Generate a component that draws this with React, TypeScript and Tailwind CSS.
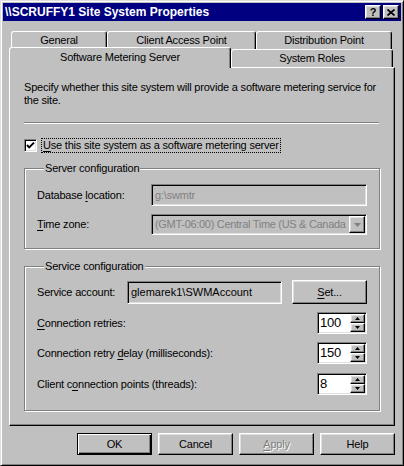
import React from 'react';

const raised =
  'border border-t-white border-l-white border-r-black border-b-black shadow-[inset_-1px_-1px_0_#808080,inset_1px_1px_0_#dfdfdf]';
const sunken =
  'border border-t-[#808080] border-l-[#808080] border-r-white border-b-white shadow-[inset_1px_1px_0_#000,inset_-1px_-1px_0_#dfdfdf]';
const group =
  'm-0 border border-[#808080] p-0 shadow-[inset_1px_1px_0_#fff,1px_1px_0_#fff]';

function U({ children }: { children: React.ReactNode }) {
  return <span className="underline decoration-1 underline-offset-[2px]">{children}</span>;
}

function Tab({ label, width, selected }: { label: string; width: string; selected?: boolean }) {
  return (
    <div
      className={`${width} flex items-center justify-center rounded-t-[3px] border-t border-l border-r border-t-white border-l-white border-r-black bg-[#c0c0c0] shadow-[inset_-1px_0_0_#808080] ${
        selected ? 'relative z-10 -mb-[1px] h-[21px] pb-[2px]' : 'h-[18px]'
      }`}
    >
      {label}
    </div>
  );
}

function Arrow({ up, gray, size = 'sm' }: { up?: boolean; gray?: boolean; size?: 'sm' | 'md' }) {
  const w = size === 'sm' ? 5 : 7;
  const h = size === 'sm' ? 3 : 4;
  return (
    <svg width={w} height={h} viewBox={`0 0 ${w} ${h}`}>
      <polygon
        points={up ? `0,${h} ${w / 2},0 ${w},${h}` : `0,0 ${w / 2},${h} ${w},0`}
        fill={gray ? '#808080' : '#000'}
      />
    </svg>
  );
}

function Spinner({ value }: { value: string }) {
  return (
    <div className={`${sunken} flex h-[22px] w-[50px] bg-white`}>
      <span className="flex-1 pl-[2px] pt-[3px] text-[13px] leading-[14px] text-black">{value}</span>
      <div className="my-[1px] mr-[1px] flex w-[15px] flex-col">
        <div className={`${raised} flex h-[9px] items-center justify-center bg-[#c0c0c0]`}>
          <Arrow up />
        </div>
        <div className={`${raised} flex h-[9px] items-center justify-center bg-[#c0c0c0]`}>
          <Arrow />
        </div>
      </div>
    </div>
  );
}

function Btn({ children, def, disabled }: { children: React.ReactNode; def?: boolean; disabled?: boolean }) {
  const edge = def
    ? 'border border-black shadow-[inset_1px_1px_0_#fff,inset_-1px_-1px_0_#000,inset_-2px_-2px_0_#808080]'
    : raised;
  return (
    <div
      className={`${edge} flex h-[22px] w-[75px] items-center justify-center bg-[#c0c0c0] ${
        disabled ? 'text-[#808080] [text-shadow:1px_1px_0_#ffffff]' : 'text-black'
      }`}
    >
      {children}
    </div>
  );
}

export default function App() {
  return (
    <div className="h-[466px] w-[404px] overflow-hidden border border-t-[#dfdfdf] border-l-[#dfdfdf] border-r-black border-b-black bg-[#c0c0c0] p-[2px] font-['Liberation_Sans',Arial,sans-serif] text-[11px] leading-[13px] tracking-[-0.2px] text-black shadow-[inset_1px_1px_0_#fff,inset_-1px_-1px_0_#808080]">
      {/* title bar */}
      <div className="flex h-[18px] items-center bg-[#000080] pl-[2px] pr-[2px]">
        <span className="flex-1 text-[12px] font-bold leading-none tracking-normal text-white">
          {'\\\\SCRUFFY1 Site System Properties'}
        </span>
        <div className={`${raised} flex h-[14px] w-[16px] items-center justify-center bg-[#c0c0c0] text-[11px] font-bold leading-none`}>
          ?
        </div>
        <div className={`${raised} ml-[2px] flex h-[14px] w-[16px] items-center justify-center bg-[#c0c0c0]`}>
          <svg width="8" height="7" viewBox="0 0 8 7">
            <path d="M0.5 0.5 L7.5 6.5 M7.5 0.5 L0.5 6.5" stroke="#000" strokeWidth="1.7" />
          </svg>
        </div>
      </div>

      <div className="px-[6px] pt-[10px]">
        {/* tabs */}
        <div className="ml-[2px] flex h-[17px]">
          <Tab label="General" width="w-[96px]" />
          <Tab label="Client Access Point" width="w-[149px]" />
          <Tab label="Distribution Point" width="w-[136px]" />
        </div>
        <div className="-mt-[1px] flex h-[20px] items-end">
          <Tab label="Software Metering Server" width="w-[222px]" selected />
          <Tab label="System Roles" width="w-[162px]" />
        </div>

        {/* panel */}
        <div className="h-[359px] w-[386px] border border-t-white border-l-white border-r-black border-b-black px-[14px] pt-[13px] shadow-[inset_-1px_-1px_0_#808080]">
          <p>
            Specify whether this site system will provide a software metering service for
            <br />
            the site.
          </p>
          <div className="mt-[15px] h-[2px] w-[355px] border-t border-b border-t-[#808080] border-b-white" />

          <div className="mt-[13px] flex h-[16px] items-center">
            <div className={`${sunken} flex h-[13px] w-[13px] items-center justify-center bg-white`}>
              <svg width="9" height="9" viewBox="0 0 9 9">
                <polyline points="1,4 3.2,6.4 8,1.6" fill="none" stroke="#000" strokeWidth="2" />
              </svg>
            </div>
            <span className="ml-[4px] border border-dotted border-black px-[1px]">
              <U>U</U>se this site system as a software metering server
            </span>
          </div>

          {/* server configuration */}
          <fieldset className={`${group} mt-[9px] px-[12px] pb-[13px]`}>
            <legend className="ml-[7px] bg-[#c0c0c0] px-[1px]">Server configuration</legend>
            <div className="mt-[9px] flex h-[22px] items-center">
              <span className="w-[114px]">
                Database <U>l</U>ocation:
              </span>
              <div className={`${sunken} flex h-[22px] w-[216px] items-center bg-[#c0c0c0] pl-[3px] text-[#808080]`}>
                {'g:\\swmtr'}
              </div>
            </div>
            <div className="mt-[8px] flex h-[21px] items-center">
              <span className="w-[114px]">
                <U>T</U>ime zone:
              </span>
              <div className={`${sunken} flex h-[21px] w-[216px] items-center bg-[#c0c0c0]`}>
                <span className="flex-1 overflow-hidden whitespace-nowrap pl-[3px] tracking-[-0.3px] text-[#808080]">
                  (GMT-06:00) Central Time (US &amp; Canada
                </span>
                <div className={`${raised} mr-[1px] flex h-[17px] w-[16px] shrink-0 items-center justify-center bg-[#c0c0c0]`}>
                  <Arrow gray size="md" />
                </div>
              </div>
            </div>
          </fieldset>

          {/* service configuration */}
          <fieldset className={`${group} mt-[11px] px-[12px] pb-[15px]`}>
            <legend className="ml-[7px] bg-[#c0c0c0] px-[1px]">Service configuration</legend>
            <div className="mt-[7px] flex h-[24px] items-center">
              <span className="w-[90px]">Service account:</span>
              <div className={`${sunken} flex h-[23px] w-[155px] items-center bg-[#c0c0c0] pl-[3px] tracking-normal`}>
                {'glemarek1\\SWMAccount'}
              </div>
              <div className={`${raised} ml-auto flex h-[24px] w-[75px] items-center justify-center bg-[#c0c0c0]`}>
                <span>
                  <U>S</U>et...
                </span>
              </div>
            </div>
            <div className="mt-[8px] flex h-[22px] items-center">
              <span className="flex-1">
                <U>C</U>onnection retries:
              </span>
              <Spinner value="100" />
            </div>
            <div className="mt-[8px] flex h-[22px] items-center">
              <span className="flex-1">
                Connection retry <U>d</U>elay (milliseconds):
              </span>
              <Spinner value="150" />
            </div>
            <div className="mt-[9px] flex h-[22px] items-center">
              <span className="flex-1">
                Client c<U>o</U>nnection points (threads):
              </span>
              <Spinner value="8" />
            </div>
          </fieldset>
        </div>

        {/* dialog buttons */}
        <div className="mt-[7px] flex justify-end gap-[6px]">
          <Btn def>OK</Btn>
          <Btn>Cancel</Btn>
          <Btn disabled>
            <span>
              <U>A</U>pply
            </span>
          </Btn>
          <Btn>Help</Btn>
        </div>
      </div>
    </div>
  );
}
